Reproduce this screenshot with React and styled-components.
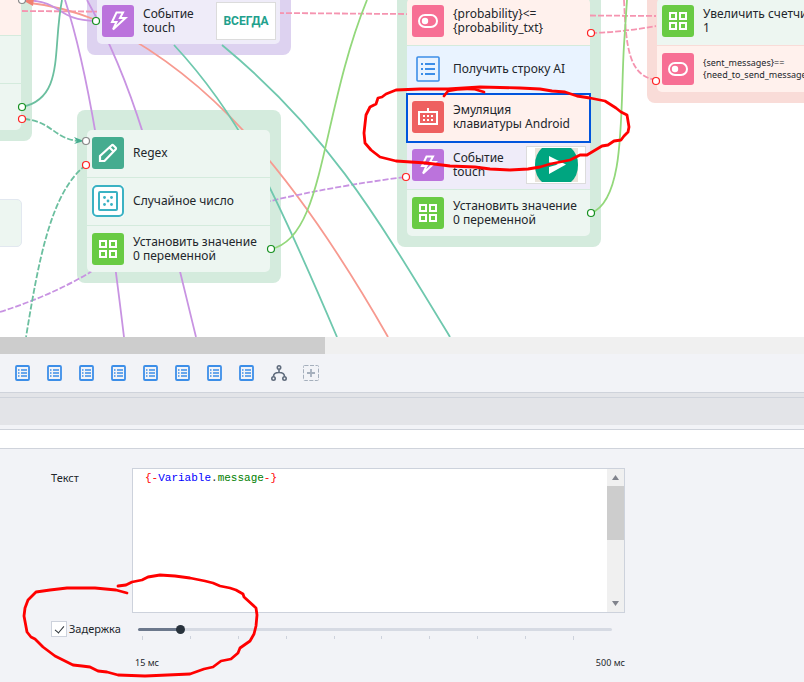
import { useState } from "react";
import styled, { createGlobalStyle } from "styled-components";

const GlobalStyle = createGlobalStyle`
  * {
    box-sizing: border-box;
  }

  body {
    margin: 0;
    background-color: #f2f3f7;
    color: #22262b;
    font-family: "Noto Sans", "Open Sans", sans-serif;
  }
`;

// Canvas
const Page = styled.div`
  position: relative;
  min-height: 100vh;
  overflow: hidden;
`;

const Canvas = styled.main`
  position: relative;
  height: 337px;
  overflow: hidden;
  background-color: #fff;
`;

const Group = styled.section`
  position: absolute;
  left: ${({ $x }) => $x}px;
  top: ${({ $y }) => $y}px;
  width: 204px;
  padding: 20px 11px 11px 10px;
  border-radius: 8px;
  background-color: ${({ $color }) => $color};
`;

const Steps = styled.ul`
  position: relative;
  z-index: 2;
  margin: 0;
  padding: 0;
  list-style: none;
`;

const Step = styled.li`
  display: flex;
  align-items: center;
  gap: 9px;
  height: 48px;
  padding: 0 4px 1px 5px;
  border-bottom: 1px solid ${({ $line }) => $line || "#d4ebdd"};
  background-color: ${({ $color }) => $color || "#edf6f1"};

  &:first-child {
    border-radius: 5px 5px 0 0;
  }

  &:last-child {
    height: 46px;
    padding-bottom: 0;
    border-bottom: none;
    border-radius: 0 0 5px 5px;
  }

  ${({ $selected }) => $selected && "outline: 2px solid #0055dd; outline-offset: -1px;"}
`;

const StepIcon = styled.span`
  display: flex;
  flex: none;
  align-items: center;
  justify-content: center;
  width: 32px;
  height: 32px;
  border-radius: 3px;
  background-color: ${({ $color }) => $color};
`;

const StepTitle = styled.span`
  flex: 1;
  min-width: 0;
  font-size: ${({ $small }) => ($small ? 9 : 12)}px;
  line-height: ${({ $small }) => ($small ? 12 : 14)}px;
  white-space: pre;
`;

const Thumb = styled.span`
  display: flex;
  flex: none;
  align-items: center;
  justify-content: center;
  width: 60px;
  height: 38px;
  border: 1px solid #dcdcdc;
  background-color: #fff;
  color: #22a08c;
  font: bold 12px Roboto, sans-serif;
`;

const EmptyNode = styled.div`
  position: absolute;
  left: -162px;
  top: 199px;
  width: 184px;
  height: 48px;
  border: 1px solid #e2e8f0;
  border-radius: 5px;
  background-color: #edf6f1;
`;

const Layer = styled.svg`
  position: absolute;
  left: 0;
  top: 0;
  z-index: ${({ $level }) => $level};
  overflow: visible;
  pointer-events: none;
  fill: none;
`;

// Bars between the canvas and the properties
const HorizontalScroll = styled.div`
  height: 17px;
  background-color: #f0f0f0;
`;

const HorizontalThumb = styled.div`
  width: 325px;
  height: 100%;
  background-color: #cdcdcd;
`;

const Toolbar = styled.nav`
  display: flex;
  align-items: center;
  gap: 16px;
  height: 38px;
  padding: 0 15px;
`;

const ToolButton = styled.button`
  display: flex;
  align-items: center;
  justify-content: center;
  width: 16px;
  height: 16px;
  padding: 0;
  border: none;
  background: none;
  cursor: pointer;
`;

const Splitter = styled.div`
  height: 5px;
  border-top: 1px solid #cfd3db;
  background-color: #e3e4e8;
`;

const TabsBar = styled.div`
  height: 28px;
  border-top: 1px solid #cfd3db;
  background-color: #e3e4e8;
`;

const NameBar = styled.div`
  height: 20px;
  margin-top: 4px;
  border: solid #cfd3db;
  border-width: 1px 0;
  background-color: #fff;
`;

// Properties form
const Form = styled.form`
  display: grid;
  grid-template-columns: 81px minmax(0, 493px);
  row-gap: 8px;
  padding: 19px 51px 0;
`;

const Label = styled.label`
  padding-top: 2px;
  font-size: 11px;
  line-height: 16px;
`;

const Editor = styled.div`
  display: flex;
  height: 145px;
  border: 1px solid #cdd2dc;
  background-color: #fff;
`;

const CodeArea = styled.div`
  position: relative;
  flex: 1;
  min-width: 0;
`;

const codeText = `
  margin: 0;
  padding: 2px 12px;
  font: 11px/14px "Liberation Mono", monospace;
  white-space: pre-wrap;
`;

const Highlight = styled.pre`
  ${codeText}
`;

const CodeInput = styled.textarea`
  ${codeText}
  position: absolute;
  inset: 0;
  width: 100%;
  height: 100%;
  border: none;
  outline: none;
  resize: none;
  overflow: hidden;
  background: transparent;
  color: transparent;
  caret-color: #000;
`;

const Token = styled.span`
  color: ${({ $color }) => $color};
`;

const VerticalScroll = styled.div`
  display: flex;
  flex-direction: column;
  width: 17px;
  background-color: #f0f0f0;
`;

const ScrollButton = styled.button`
  display: flex;
  align-items: center;
  justify-content: center;
  height: 17px;
  padding: 0;
  border: none;
  background: none;
`;

const VerticalThumb = styled.div`
  height: 54px;
  margin-bottom: auto;
  background-color: #cdcdcd;
`;

const CheckLabel = styled.label`
  display: flex;
  align-items: center;
  gap: 2px;
  height: 16px;
  font-size: 11px;
  line-height: 16px;
`;

const Check = styled.input`
  appearance: none;
  display: grid;
  place-items: center;
  width: 16px;
  height: 16px;
  margin: 0;
  border: 1px solid #cdd2dc;
  background-color: #fff;

  &:checked::after {
    content: "";
    width: 4px;
    height: 8px;
    margin-bottom: 2px;
    border: solid #2b3238;
    border-width: 0 1px 1px 0;
    transform: rotate(40deg);
  }
`;

const SliderBox = styled.div`
  padding: 0 13px 0 6px;
`;

const Slider = styled.input`
  appearance: none;
  display: block;
  width: 100%;
  height: 16px;
  margin: 0;
  background: none;

  &::-webkit-slider-runnable-track {
    height: 3px;
    border-radius: 2px;
    background: linear-gradient(
      to right,
      #6c788c ${({ $fill }) => $fill}%,
      #d6dae3 ${({ $fill }) => $fill}%
    );
  }

  &::-webkit-slider-thumb {
    appearance: none;
    width: 9px;
    height: 9px;
    margin-top: -3px;
    border-radius: 50%;
    background-color: #28323c;
  }
`;

const Ticks = styled.div`
  display: flex;
  justify-content: space-between;
  height: 4px;
  margin: -1px 38px 0 4px;
`;

const Tick = styled.span`
  width: 1px;
  height: 3px;
  background-color: #cdd2dc;

  &:first-child,
  &:last-child {
    height: 4px;
  }
`;

const Range = styled.div`
  display: flex;
  justify-content: space-between;
  margin-top: 16px;
  margin-right: -13px;
  margin-left: -3px;
  font-size: 9px;
  line-height: 14px;
`;

const icon = { fill: "none", stroke: "#fff", strokeWidth: 2 };

function BoltIcon() {
  return (
    <StepIcon $color="#bb73dc">
      <svg width="32" height="32" {...icon}>
        <path d="M14.500 7.500H21L18 13H23.500L11 24.500L14.500 17H10z" />
      </svg>
    </StepIcon>
  );
}

function GridIcon() {
  return (
    <StepIcon $color="#69cb44">
      <svg width="32" height="32" {...icon}>
        <path d="M8 8h6v6H8zM18 8h6v6h-6zM8 18h6v6H8zM18 18h6v6h-6z" />
      </svg>
    </StepIcon>
  );
}

function ToggleIcon() {
  return (
    <StepIcon $color="#f76f94">
      <svg width="32" height="32" {...icon}>
        <rect x="7" y="10" width="18" height="12" rx="6" />
        <circle cx="13" cy="16" r="3.200" fill="#fff" stroke="none" />
      </svg>
    </StepIcon>
  );
}

function PencilIcon() {
  return (
    <StepIcon $color="#45ac8f">
      <svg width="32" height="32" {...icon} strokeWidth="2.200">
        <path d="M8 24v-5L19.500 8.500q1-1 2 0l2 2q1 1 0 2L12.500 24zM17.500 10.500l4.500 4.500" />
      </svg>
    </StepIcon>
  );
}

const dots = [
  [12.5, 12.5],
  [19.5, 12.5],
  [16, 16],
  [12.5, 19.5],
  [19.5, 19.5],
];

function DiceIcon() {
  return (
    <StepIcon $color="#fff">
      <svg width="32" height="32" fill="none" stroke="#3bb2c3" strokeWidth="2">
        <rect x="1" y="1" width="30" height="30" rx="4" />
        <rect x="7" y="7" width="18" height="18" rx="1" />
        {dots.map(([x, y]) => (
          <circle key={`${x}-${y}`} cx={x} cy={y} r="1.400" fill="#3bb2c3" stroke="none" />
        ))}
      </svg>
    </StepIcon>
  );
}

function ListIcon() {
  return (
    <StepIcon>
      <svg width="32" height="32" fill="none" stroke="#3c8ee8" strokeWidth="2">
        <rect x="5" y="4" width="22" height="24" rx="1" strokeWidth="1.600" />
        <path d="M9 11h2M13 11h10M9 16h2M13 16h10M9 21h2M13 21h10" />
      </svg>
    </StepIcon>
  );
}

function KeyboardIcon() {
  return (
    <StepIcon $color="#ee6060">
      <svg width="32" height="32" {...icon}>
        <path d="M7 11h18v12H7zM16 11V7" />
        <path d="M11 15h10M11 19h10" strokeDasharray="2 2" />
      </svg>
    </StepIcon>
  );
}

function SendPicture() {
  return (
    <svg width="58" height="36">
      <path d="M8 1h43v34H8z" fill="#e9e4da" />
      <path d="M15 1h29q7 6 7 17t-7 17H15q-7-6-7-17t7-17z" fill="#00a580" />
      <path d="M22 9l17 8.500L22 27v-7l9-2.500-9-2z" fill="#fff" />
    </svg>
  );
}

function SmallListIcon() {
  return (
    <svg width="16" height="16" fill="none" stroke="#3c8ee8">
      <rect x="1" y="1" width="13" height="14" rx="1" strokeWidth="1.800" />
      <path d="M3 5h1.500M6 5h6M3 8h1.500M6 8h6M3 11h1.500M6 11h6" strokeWidth="1.300" />
    </svg>
  );
}

function TreeIcon() {
  return (
    <svg width="16" height="16" fill="none" stroke="#5f6b7c" strokeWidth="1.600">
      <circle cx="8" cy="2.500" r="1.700" />
      <circle cx="2.500" cy="13.500" r="1.700" />
      <circle cx="13.500" cy="13.500" r="1.700" />
      <path d="M8 4.500v3M2.500 11.500q0-4 5.500-4t5.500 4" />
    </svg>
  );
}

function AddIcon() {
  return (
    <svg width="16" height="16" fill="none" stroke="#a5afbc">
      <rect x="0.500" y="0.500" width="15" height="15" rx="1" strokeDasharray="4 1.500" />
      <path d="M4 8h8M8 4v8" strokeWidth="1.800" />
    </svg>
  );
}

const wires = [
  { color: "#f594b0", dash: true, d: "M22 11L656 16" },
  { color: "#f594b0", dash: true, d: "M591 33Q625 32 656 26" },
  { color: "#f594b0", dash: true, d: "M624 0C626 45 628 76 656 80" },
  { color: "#f79a90", d: "M30 3Q60 6 96 20C180 60 270 130 388 337" },
  { color: "#c893e2", d: "M26 0C65 2 55 20 96 21" },
  { color: "#c893e2", d: "M65 0C88 70 105 180 124 337" },
  { color: "#c893e2", d: "M87 0C140 95 160 190 196 337" },
  { color: "#c893e2", dash: true, d: "M0 312Q50 296 89 273Q190 205 405 177" },
  { color: "#6fc8ae", d: "M174 45C237 113 268 175 337 337" },
  { color: "#6fc8ae", d: "M222 45C325 130 373 210 450 337" },
  { color: "#6bbf9f", d: "M22 107C65 98 52 50 62 0" },
  { color: "#6bbf9f", dash: true, d: "M24 119C52 121 55 140 80 141" },
  { color: "#6bbf9f", dash: true, d: "M86 165C50 192 38 265 26 337" },
  { color: "#93d87b", d: "M271 249C325 238 320 115 367 0" },
  { color: "#93d87b", d: "M591 213C626 200 620 110 624 45L627 0" },
];

const pins = [
  [22, 0, "#888"],
  [86, 141, "#888"],
  [96, 21, "#159020"],
  [22, 107, "#159020"],
  [271, 249, "#159020"],
  [591, 213, "#159020"],
  [22, 119, "#f22"],
  [86, 165, "#f22"],
  [591, 33, "#f22"],
  [406, 177, "#f22"],
  [656, 81, "#f22"],
];

function Wires() {
  return (
    <Layer $level={1} width="804" height="337">
      {wires.map(({ color, dash, d }) => (
        <path key={d} d={d} stroke={color} strokeWidth="1.800" strokeDasharray={dash ? "6 2" : undefined} />
      ))}
      <path d="M24 1l10-3-1 8z" fill="#f08070" />
      <path d="M84 141l-10-4 3 4-3 3z" fill="#45ac8f" />
    </Layer>
  );
}

function Pins() {
  return (
    <Layer $level={3} width="804" height="337">
      {pins.map(([x, y, color]) => (
        <circle key={`${x}-${y}`} cx={x} cy={y} r="3.500" fill="#fff" stroke={color} strokeWidth="1.200" />
      ))}
    </Layer>
  );
}

// Red pen marks
function Marks() {
  return (
    <Layer $level={4} width="804" height="682" stroke="#f00" strokeWidth="2.800" strokeLinejoin="round" strokeLinecap="round">
      <path d="M444 96L448 91Q460 88 474 89L484 92" />
      <path d="M420 89L396 90L386 94L382 97L378 98L376 104L370 107L366 115L364 133L365 143L371 150L380 157L396 161L426 163L450 166L475 167L490 169L510 170L528 169L540 167L550 164L570 160L580 155L587 155L602 146L608 145L614 141L621 140L624 136L628 132L629 127L627 115L621 112L616 108L605 101L590 98L577 96L565 92L552 91L540 89L520 88L480 87L448 89L420 89" />
      <path d="M127 593L116 590L95 588L67 588L50 590L36 592L28 600L25 608L24 616L27 632L31 637L35 639L43 647L55 656L73 665L82 666L90 667L98 671L107 672L118 675L145 676L190 674L204 669L213 667L221 661L231 659L238 653L240 648L250 641L254 634L256 626L257 615L256 608L244 597L243 594L236 590L230 588L220 586L213 583L205 581L190 578L175 576L160 575L148 577L142 580L132 582L126 585L118 586" />
    </Layer>
  );
}

const tokenColors = [
  [/^[{}-]$/, "#ff0000"],
  [/^Variable$/, "#0000ff"],
  [/^[.]$/, "#333"],
];

function colorOf(token) {
  const match = tokenColors.find(([pattern]) => pattern.test(token));
  return match ? match[1] : "#008000";
}

function Properties() {
  const [text, setText] = useState("{-Variable.message-}");
  const [delay, setDelay] = useState(55);
  const [enabled, setEnabled] = useState(true);

  return (
    <Form>
      <Label htmlFor="text">Текст</Label>
      <Editor>
        <CodeArea>
          <Highlight aria-hidden="true">
            {text.split(/([{}.-])/).filter(Boolean).map((token, index) => (
              <Token key={index} $color={colorOf(token)}>
                {token}
              </Token>
            ))}
          </Highlight>
          <CodeInput id="text" spellCheck={false} value={text} onChange={(e) => setText(e.target.value)} />
        </CodeArea>
        <VerticalScroll>
          <ScrollButton type="button" aria-label="Вверх">
            <svg width="7" height="5" fill="#80838c">
              <path d="M0 5L3.500 0L7 5z" />
            </svg>
          </ScrollButton>
          <VerticalThumb />
          <ScrollButton type="button" aria-label="Вниз">
            <svg width="7" height="5" fill="#80838c">
              <path d="M0 0h7L3.500 5z" />
            </svg>
          </ScrollButton>
        </VerticalScroll>
      </Editor>
      <CheckLabel>
        <Check type="checkbox" checked={enabled} onChange={(e) => setEnabled(e.target.checked)} />
        Задержка
      </CheckLabel>
      <SliderBox>
        <Slider
          type="range"
          aria-label="Задержка, мс"
          min="15"
          max="500"
          value={delay}
          $fill={((delay - 15) / 485) * 100}
          onChange={(e) => setDelay(Number(e.target.value))}
        />
        <Ticks>
          {Array.from({ length: 10 }, (_, index) => (
            <Tick key={index} />
          ))}
        </Ticks>
        <Range>
          <span>15 мс</span>
          <span>500 мс</span>
        </Range>
      </SliderBox>
    </Form>
  );
}

// Function Main
export default function App() {
  return (
    <>
      <GlobalStyle />
      <Page>
        <Canvas>
          <Group $x={-172} $y={-32} $color="#d4ebdd">
            <Steps>
              <Step $color="#fff1ed" />
              <Step />
              <Step />
            </Steps>
          </Group>
          <EmptyNode />
          <Group $x={87} $y={-22} $color="#ddd2f0">
            <Steps>
              <Step $color="#efecf9">
                <BoltIcon />
                <StepTitle>{"Событие\ntouch"}</StepTitle>
                <Thumb>ВСЕГДА</Thumb>
              </Step>
            </Steps>
          </Group>
          <Group $x={77} $y={110} $color="#d4ebdd">
            <Steps>
              <Step>
                <PencilIcon />
                <StepTitle>Regex</StepTitle>
              </Step>
              <Step>
                <DiceIcon />
                <StepTitle>Случайное число</StepTitle>
              </Step>
              <Step>
                <GridIcon />
                <StepTitle>{"Установить значение\n0 переменной"}</StepTitle>
              </Step>
            </Steps>
          </Group>
          <Group $x={397} $y={-22} $color="#d4ebdd">
            <Steps>
              <Step $color="#fff1ed">
                <ToggleIcon />
                <StepTitle>{"{probability}<=\n{probability_txt}"}</StepTitle>
              </Step>
              <Step $color="#e9f3ff">
                <ListIcon />
                <StepTitle>Получить строку AI</StepTitle>
              </Step>
              <Step $color="#fff1ed" $selected>
                <KeyboardIcon />
                <StepTitle>{"Эмуляция\nклавиатуры Android"}</StepTitle>
              </Step>
              <Step $color="#efecf9">
                <BoltIcon />
                <StepTitle>{"Событие\ntouch"}</StepTitle>
                <Thumb>
                  <SendPicture />
                </Thumb>
              </Step>
              <Step>
                <GridIcon />
                <StepTitle>{"Установить значение\n0 переменной"}</StepTitle>
              </Step>
            </Steps>
          </Group>
          <Group $x={647} $y={-22} $color="#f9dcd8">
            <Steps>
              <Step $line="#f9dcd8">
                <GridIcon />
                <StepTitle>{"Увеличить счетчик\n1"}</StepTitle>
              </Step>
              <Step $color="#fff1ed">
                <ToggleIcon />
                <StepTitle $small>{"{sent_messages}==\n{need_to_send_messages}"}</StepTitle>
              </Step>
            </Steps>
          </Group>
          <Wires />
          <Pins />
        </Canvas>
        <HorizontalScroll>
          <HorizontalThumb />
        </HorizontalScroll>
        <Toolbar>
          {Array.from({ length: 8 }, (_, index) => (
            <ToolButton key={index} type="button" aria-label={`Список ${index + 1}`}>
              <SmallListIcon />
            </ToolButton>
          ))}
          <ToolButton type="button" aria-label="Дерево">
            <TreeIcon />
          </ToolButton>
          <ToolButton type="button" aria-label="Добавить">
            <AddIcon />
          </ToolButton>
        </Toolbar>
        <Splitter />
        <TabsBar />
        <NameBar />
        <Properties />
        <Marks />
      </Page>
    </>
  );
}
